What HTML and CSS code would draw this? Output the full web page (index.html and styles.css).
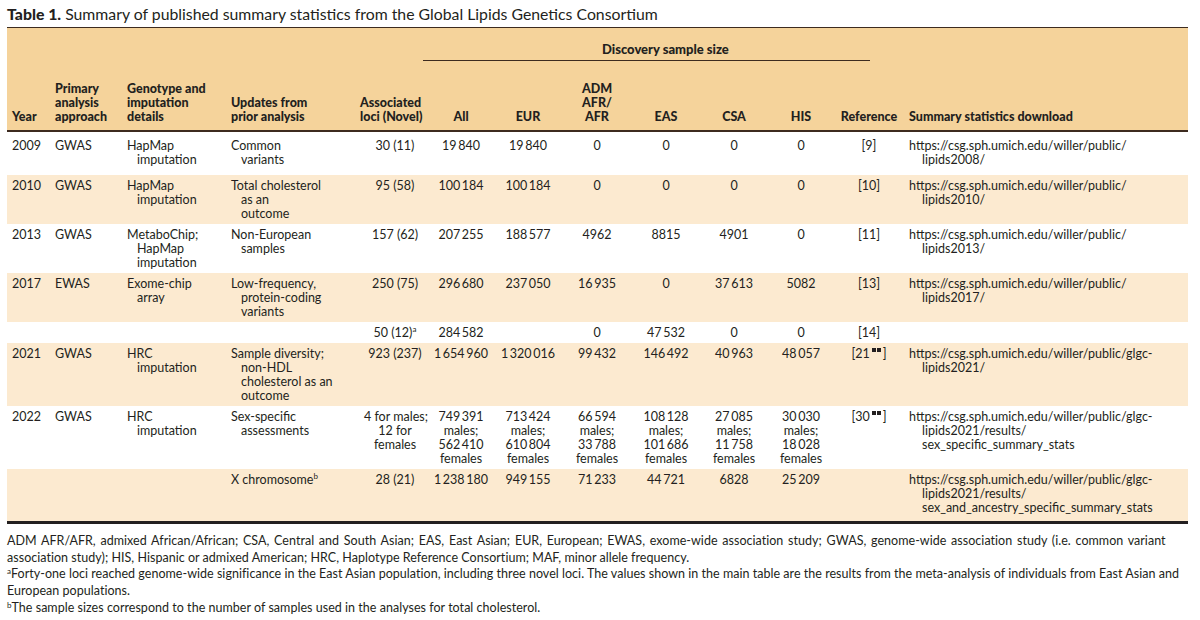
FILE: index.html
```html
<!DOCTYPE html>
<html lang="en">
<head>
<meta charset="utf-8">
<title>Table 1</title>
<link rel="stylesheet" href="styles.css">
</head>
<body>
<div class="caption"><b>Table 1.</b> Summary of published summary statistics from the Global Lipids Genetics Consortium</div>
<table class="tbl">
<colgroup>
<col class="c-year"><col class="c-prim"><col class="c-geno"><col class="c-upd"><col class="c-loci">
<col class="c-all"><col class="c-eur"><col class="c-adm"><col class="c-eas"><col class="c-csa"><col class="c-his">
<col class="c-ref"><col class="c-url">
</colgroup>
<thead>
<tr class="group">
<th colspan="5"></th>
<th colspan="7" class="disc-cell"><div class="disc">Discovery sample size</div></th>
<th></th>
</tr>
<tr class="cols">
<th class="l">Year</th>
<th class="l">Primary<br>analysis<br>approach</th>
<th class="l">Genotype and<br>imputation<br>details</th>
<th class="l">Updates from<br>prior analysis</th>
<th class="r">Associated<br>loci (Novel)</th>
<th>All</th>
<th>EUR</th>
<th>ADM<br>AFR/<br>AFR</th>
<th>EAS</th>
<th>CSA</th>
<th>HIS</th>
<th>Reference</th>
<th class="l">Summary statistics download</th>
</tr>
</thead>
<tbody>
<tr class="first">
<td class="l">2009</td><td class="l">GWAS</td>
<td class="l hang">HapMap<br>imputation</td>
<td class="l hang">Common<br>variants</td>
<td class="loci">30 (11)</td><td>19&#8201;840</td><td>19&#8201;840</td><td>0</td><td>0</td><td>0</td><td>0</td><td>[9]</td>
<td class="l url">https://csg.sph.umich.edu/willer/public/<br>lipids2008/</td>
</tr>
<tr class="band">
<td class="l">2010</td><td class="l">GWAS</td>
<td class="l hang">HapMap<br>imputation</td>
<td class="l hang">Total cholesterol<br>as an<br>outcome</td>
<td class="loci">95 (58)</td><td>100&#8201;184</td><td>100&#8201;184</td><td>0</td><td>0</td><td>0</td><td>0</td><td>[10]</td>
<td class="l url">https://csg.sph.umich.edu/willer/public/<br>lipids2010/</td>
</tr>
<tr>
<td class="l">2013</td><td class="l">GWAS</td>
<td class="l hang">MetaboChip;<br>HapMap<br>imputation</td>
<td class="l hang">Non-European<br>samples</td>
<td class="loci">157 (62)</td><td>207&#8201;255</td><td>188&#8201;577</td><td>4962</td><td>8815</td><td>4901</td><td>0</td><td>[11]</td>
<td class="l url">https://csg.sph.umich.edu/willer/public/<br>lipids2013/</td>
</tr>
<tr class="band">
<td class="l">2017</td><td class="l">EWAS</td>
<td class="l hang">Exome-chip<br>array</td>
<td class="l hang">Low-frequency,<br>protein-coding<br>variants</td>
<td class="loci">250 (75)</td><td>296&#8201;680</td><td>237&#8201;050</td><td>16&#8201;935</td><td>0</td><td>37&#8201;613</td><td>5082</td><td>[13]</td>
<td class="l url">https://csg.sph.umich.edu/willer/public/<br>lipids2017/</td>
</tr>
<tr>
<td></td><td></td><td></td><td></td>
<td class="loci">50 (12)<sup>a</sup></td><td>284&#8201;582</td><td></td><td>0</td><td>47&#8201;532</td><td>0</td><td>0</td><td>[14]</td>
<td></td>
</tr>
<tr class="band">
<td class="l">2021</td><td class="l">GWAS</td>
<td class="l hang">HRC<br>imputation</td>
<td class="l hang">Sample diversity;<br>non-HDL<br>cholesterol as an<br>outcome</td>
<td class="loci">923 (237)</td><td>1&#8201;654&#8201;960</td><td>1&#8201;320&#8201;016</td><td>99&#8201;432</td><td>146&#8201;492</td><td>40&#8201;963</td><td>48&#8201;057</td>
<td>[21<span class="sqs"><span class="sq"></span><span class="sq"></span></span>]</td>
<td class="l url">https://csg.sph.umich.edu/willer/public/glgc-<br>lipids2021/</td>
</tr>
<tr>
<td class="l">2022</td><td class="l">GWAS</td>
<td class="l hang">HRC<br>imputation</td>
<td class="l hang">Sex-specific<br>assessments</td>
<td class="loci">4 for males;<br>12 for<br>females</td>
<td>749&#8201;391<br>males;<br>562&#8201;410<br>females</td>
<td>713&#8201;424<br>males;<br>610&#8201;804<br>females</td>
<td>66&#8201;594<br>males;<br>33&#8201;788<br>females</td>
<td>108&#8201;128<br>males;<br>101&#8201;686<br>females</td>
<td>27&#8201;085<br>males;<br>11&#8201;758<br>females</td>
<td>30&#8201;030<br>males;<br>18&#8201;028<br>females</td>
<td>[30<span class="sqs"><span class="sq"></span><span class="sq"></span></span>]</td>
<td class="l url">https://csg.sph.umich.edu/willer/public/glgc-<br>lipids2021/results/<br>sex_specific_summary_stats</td>
</tr>
<tr class="band last">
<td></td><td></td><td></td>
<td class="l hang">X chromosome<sup>b</sup></td>
<td class="loci">28 (21)</td><td>1&#8201;238&#8201;180</td><td>949&#8201;155</td><td>71&#8201;233</td><td>44&#8201;721</td><td>6828</td><td>25&#8201;209</td><td></td>
<td class="l url">https://csg.sph.umich.edu/willer/public/glgc-<br>lipids2021/results/<br>sex_and_ancestry_specific_summary_stats</td>
</tr>
</tbody>
</table>
<div class="notes">
<p><span class="wide">ADM AFR/AFR, admixed African/African; CSA, Central and South Asian; EAS, East Asian; EUR, European; EWAS, exome-wide association study; GWAS, genome-wide association study (i.e. common variant</span><br>association study); HIS, Hispanic or admixed American; HRC, Haplotype Reference Consortium; MAF, minor allele frequency.</p>
<p><sup>a</sup>Forty-one loci reached genome-wide significance in the East Asian population, including three novel loci. The values shown in the main table are the results from the meta-analysis of individuals from East Asian and<br>European populations.</p>
<p><sup>b</sup>The sample sizes correspond to the number of samples used in the analyses for total cholesterol.</p>
</div>
</body>
</html>
```
FILE: styles.css
```css
html, body {
  margin: 0;
  padding: 0;
  background: #ffffff;
}
body {
  font-family: "Lato", "Liberation Sans", sans-serif;
  color: #231f20;
}
.caption {
  font-size: 15.8px;
  line-height: 20px;
  padding: 4px 0 3px 7px;
  white-space: nowrap;
}
.caption b {
  font-weight: 900;
}
.tbl {
  margin-left: 7px;
  width: 1181px;
  table-layout: fixed;
  border-collapse: collapse;
  font-size: 12.5px;
  line-height: 14px;
}
.c-year { width: 43px; }
.c-prim { width: 72px; }
.c-geno { width: 104px; }
.c-upd { width: 132px; }
.c-loci { width: 70px; }
.c-all { width: 66px; }
.c-eur { width: 68px; }
.c-adm { width: 70px; }
.c-eas { width: 68px; }
.c-csa { width: 68px; }
.c-his { width: 66px; }
.c-ref { width: 70px; }
.c-url { width: 284px; }

.tbl thead {
  background: #f5d39b;
}
.tbl thead tr.group th {
  border-top: 1.5px solid #3d2b1f;
  padding: 0;
  height: 33px;
  vertical-align: top;
}
.disc {
  margin: 0 34px 0 -5px;
  padding: 14px 0 4px 179px;
  border-bottom: 1.5px solid #3d2b1f;
  text-align: left;
  font-weight: 900;
  font-size: 13px;
}
.tbl thead tr.cols th {
  font-weight: 900;
  padding: 21px 2px 6px;
  vertical-align: bottom;
  text-align: center;
  white-space: nowrap;
  border-bottom: 2px solid #3d2b1f;
}
.tbl thead tr.cols th.l,
.tbl td.l {
  text-align: left;
  padding-left: 5px;
}
.tbl thead tr.cols th.r {
  text-align: right;
  padding-right: 9px;
}
.tbl td {
  padding: 3.5px 2px;
  vertical-align: top;
  text-align: center;
  white-space: nowrap;
  font-weight: 400;
}
.tbl td.loci {
  padding-left: 6px;
}
.tbl td.hang {
  padding-left: 15px;
  text-indent: -10px;
}
.tbl td.url {
  padding-left: 18px;
  text-indent: -13px;
}
.tbl tr.first td {
  padding-top: 7px;
  padding-bottom: 8px;
}
.tbl tr.band td {
  background: #fcead0;
}
.tbl tr.last td {
  padding-bottom: 6.5px;
  border-bottom: 3.5px solid #231f20;
}
.tbl sup {
  font-size: 8px;
  line-height: 0;
  vertical-align: 5px;
}
.sqs {
  display: inline-block;
  vertical-align: 6px;
  margin: 0 1px 0 2px;
  line-height: 0;
}
.sq {
  display: inline-block;
  width: 4px;
  height: 4px;
  background: #231f20;
  margin-right: 1px;
}
.notes {
  padding: 9px 0 0 7px;
  font-size: 12.5px;
  letter-spacing: 0.03px;
  line-height: 16.7px;
  white-space: nowrap;
}
.notes p {
  margin: 0;
}
.notes .wide {
  word-spacing: 1.5px;
}
.notes sup {
  font-size: 8px;
  line-height: 0;
  vertical-align: 4px;
}
```
